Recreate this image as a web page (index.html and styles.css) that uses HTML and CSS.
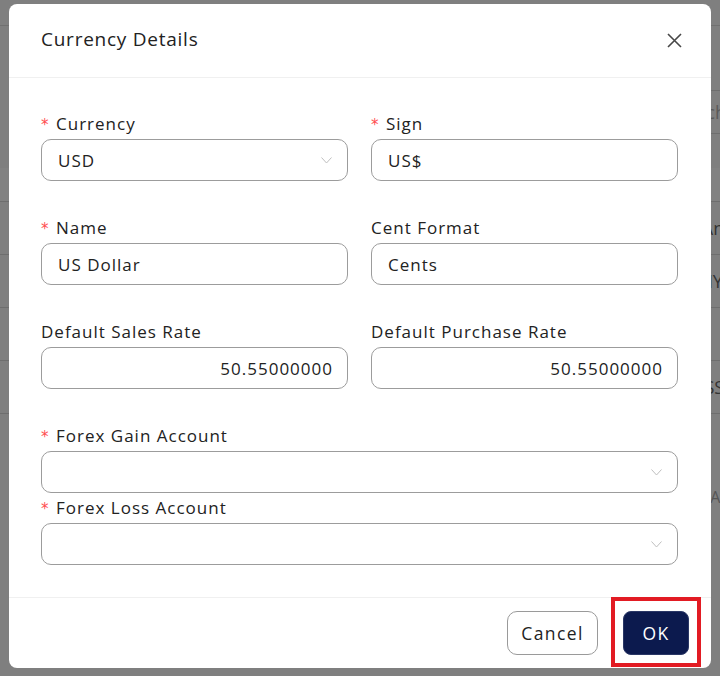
FILE: index.html
```html
<!DOCTYPE html>
<html>
<head>
<meta charset="utf-8">
<link rel="stylesheet" href="styles.css">
</head>
<body>
<div class="page">
  <div class="page-top"></div>
  <div class="page-toolbar">
    <span class="page-title">Currency Master</span>
    <div class="page-search">Search</div>
  </div>
  <div class="page-band"></div>
  <div class="page-row"><span></span><span>Ang</span></div>
  <div class="page-row"><span></span><span>MYR</span></div>
  <div class="page-row"><span></span><span></span></div>
  <div class="page-row"><span></span><span>SSS</span></div>
  <div class="page-foot"><span></span><span>Add</span></div>
</div>

<div class="modal">
  <div class="modal-header">
    <h2 class="modal-title">Currency Details</h2>
    <button class="close-btn" aria-label="Close">
      <svg width="15" height="15" viewBox="0 0 15 15"><path d="M1 1L14 14M14 1L1 14" stroke="#474747" stroke-width="1.6" fill="none"/></svg>
    </button>
  </div>
  <div class="modal-body">
    <div class="grid">
      <div class="field">
        <div class="label"><span class="req">*</span><span>Currency</span></div>
        <div class="input select"><span>USD</span><svg class="chev" width="11" height="7" viewBox="0 0 11 7"><path d="M0.5 0.5L5.5 6L10.5 0.5" stroke="#bfbfbf" stroke-width="1" fill="none"/></svg></div>
      </div>
      <div class="field">
        <div class="label"><span class="req">*</span><span>Sign</span></div>
        <div class="input"><span>US$</span></div>
      </div>
      <div class="field">
        <div class="label"><span class="req">*</span><span>Name</span></div>
        <div class="input"><span>US Dollar</span></div>
      </div>
      <div class="field">
        <div class="label"><span>Cent Format</span></div>
        <div class="input"><span>Cents</span></div>
      </div>
      <div class="field">
        <div class="label"><span>Default Sales Rate</span></div>
        <div class="input num"><span>50.55000000</span></div>
      </div>
      <div class="field">
        <div class="label"><span>Default Purchase Rate</span></div>
        <div class="input num"><span>50.55000000</span></div>
      </div>
    </div>
    <div class="field full">
      <div class="label"><span class="req">*</span><span>Forex Gain Account</span></div>
      <div class="input select"><span></span><svg class="chev" width="11" height="7" viewBox="0 0 11 7"><path d="M0.5 0.5L5.5 6L10.5 0.5" stroke="#bfbfbf" stroke-width="1" fill="none"/></svg></div>
    </div>
    <div class="field full tight">
      <div class="label"><span class="req">*</span><span>Forex Loss Account</span></div>
      <div class="input select"><span></span><svg class="chev" width="11" height="7" viewBox="0 0 11 7"><path d="M0.5 0.5L5.5 6L10.5 0.5" stroke="#bfbfbf" stroke-width="1" fill="none"/></svg></div>
    </div>
  </div>
  <div class="modal-footer">
    <button class="btn btn-cancel">Cancel</button>
    <button class="btn btn-ok">OK</button>
    <div class="highlight"></div>
  </div>
</div>
</body>
</html>
```
FILE: styles.css
```css
* { box-sizing: border-box; }
html, body { margin: 0; padding: 0; }
body {
  width: 720px;
  height: 676px;
  overflow: hidden;
  background: #7f7f7f;
  font-family: "Open Sans", "Noto Sans", sans-serif;
  position: relative;
}

/* dimmed page behind the dialog */
.page {
  width: 720px;
  color: #3a3a3a;
  font-size: 16px;
}
.page-top {
  height: 26px;
  border-bottom: 1px solid #707070;
}
.page-toolbar {
  height: 142px;
  display: flex;
  justify-content: space-between;
  align-items: flex-start;
  padding-top: 18px;
}
.page-title {
  margin-left: -146px;
  font-size: 18px;
  color: #4a4a4a;
  white-space: nowrap;
}
.page-search {
  margin-top: 46px;
  width: 290px;
  height: 44px;
  border-top: 1px solid #6e6e6e;
  border-bottom: 1px solid #6e6e6e;
  display: flex;
  align-items: center;
  justify-content: flex-end;
  margin-right: -6px;
  color: #5a5a5a;
  font-size: 18px;
}
.page-band {
  height: 34px;
  background: #828282;
  border-bottom: 1px solid #6e6e6e;
}
.page-row {
  height: 53px;
  border-bottom: 1px solid #6e6e6e;
  display: flex;
  justify-content: space-between;
  align-items: center;
  font-size: 18px;
  color: #333;
}
.page-row span:last-child { margin-right: -14px; }
.page-foot {
  height: 150px;
  display: flex;
  justify-content: space-between;
  align-items: center;
  font-size: 16px;
  color: #555;
  padding-top: 16px;
}
.page-foot span:last-child { margin-right: -20px; }

/* dialog */
.modal {
  position: absolute;
  left: 9px;
  top: 4px;
  width: 702px;
  height: 664px;
  background: #fff;
  border-radius: 8px;
  display: flex;
  flex-direction: column;
}
.modal-header {
  height: 74px;
  border-bottom: 1px solid #f0f0f0;
  display: flex;
  align-items: center;
  justify-content: space-between;
  padding: 0 29px 0 32px;
  flex-shrink: 0;
}
.modal-title {
  margin: 0;
  font-size: 19px;
  font-weight: 500;
  color: #222;
  letter-spacing: 0.75px;
  margin-top: -3px;
}
.close-btn {
  background: none;
  border: 0;
  padding: 0;
  width: 15px;
  height: 15px;
  display: flex;
}
.modal-body {
  flex: 1;
  padding: 34px 33px 0 32px;
  border-bottom: 1px solid #f0f0f0;
}
.grid {
  display: grid;
  grid-template-columns: 307px 307px;
  column-gap: 23px;
  row-gap: 35px;
}
.field.full { margin-top: 35px; }
.field.full.tight { margin-top: 3px; }
.label {
  display: flex;
  align-items: center;
  height: 22px;
  margin-bottom: 5px;
  font-size: 17px;
  color: #222;
  letter-spacing: 1px;
}
.req {
  color: #ff4d4f;
  font-size: 15px;
  width: 15px;
  flex-shrink: 0;
  letter-spacing: 0;
  font-family: "DejaVu Sans", sans-serif;
  line-height: 1;
  position: relative;
  top: 2px;
}
.input {
  height: 42px;
  border: 1px solid #9c9c9c;
  border-radius: 10px;
  display: flex;
  align-items: center;
  justify-content: space-between;
  padding: 0 15px 0 16px;
  font-size: 17px;
  color: #222;
  letter-spacing: 1px;
}
.input.num { justify-content: flex-end; padding-right: 14px; }
.chev { display: block; }

.modal-footer {
  height: 70px;
  flex-shrink: 0;
  display: flex;
  justify-content: flex-end;
  align-items: flex-start;
  padding: 13px 22px 0 0;
  gap: 25px;
  position: relative;
}
.btn {
  height: 44px;
  border-radius: 10px;
  font-family: "Open Sans", sans-serif;
  font-size: 17.5px;
  letter-spacing: 1.4px;
  cursor: pointer;
  padding: 0;
}
.btn-cancel {
  width: 91px;
  background: #fff;
  border: 1px solid #9a9a9a;
  color: #222;
}
.btn-ok {
  width: 66px;
  background: #0c1a4e;
  border: 1px solid #2a3766;
  border-radius: 8px;
  color: #fff;
  font-weight: 500;
}
.highlight {
  position: absolute;
  left: 602px;
  top: -1px;
  width: 90px;
  height: 70px;
  border: 4px solid #e21b23;
  pointer-events: none;
}
```
